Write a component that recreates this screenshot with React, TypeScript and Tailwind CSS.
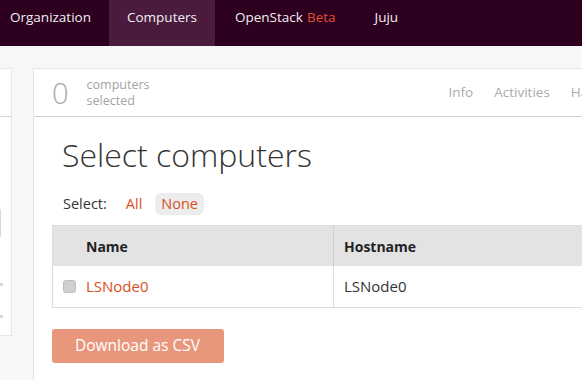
import React from 'react';

const font = { fontFamily: '"Open Sans", "DejaVu Sans", sans-serif' };

function TopNav() {
  return (
    <nav className="flex h-[46px] bg-[#2c001e] text-[13.5px] text-[#f2eef0]">
      <a className="w-[109px] pl-[10px] pt-[7px]">Organization</a>
      <a className="w-[106px] pt-[7px] text-center bg-[#4a1b3d]">Computers</a>
      <a className="pl-[20px] pr-[20px] pt-[7px]">
        OpenStack<span className="ml-[4px] text-[#e0502e]">Beta</span>
      </a>
      <a className="pl-[19px] pt-[7px]">Juju</a>
    </nav>
  );
}

function Sidebar() {
  return (
    <aside className="ml-[-188px] w-[200px] h-[268px] shrink-0 bg-white border border-[#e6e6e6] flex flex-col">
      <div className="h-[48px] border-b border-[#d4d4d4]" />
      <div className="mt-[91px] mx-[10px] h-[30px] border border-[#d8d8d8] rounded-[2px]" />
      <div className="mt-[45px] self-end mr-[8px] w-[3px] h-[3px] bg-[#d6d6d6]" />
      <div className="mt-[29px] self-end mr-[8px] w-[3px] h-[3px] bg-[#d6d6d6]" />
    </aside>
  );
}

export default function App() {
  return (
    <div className="w-[582px] h-[380px] overflow-hidden bg-[#f7f7f7]" style={font}>
      <TopNav />
      <div className="flex gap-[21px] pt-[22px]">
        <Sidebar />
        <main className="w-[640px] shrink-0 h-[340px] bg-white border border-[#e6e6e6]">
          <header className="h-[48px] flex items-center border-b border-[#cfcfcf] pl-[18px]">
            <span className="text-[29px] leading-none text-[#aaa] font-light">0</span>
            <div className="ml-[18px] text-[12.5px] leading-[16px] text-[#a3a3a3]">
              <div>computers</div>
              <div>selected</div>
            </div>
            <div className="ml-[299px] flex gap-[21px] text-[13.5px] text-[#ababab]">
              <span>Info</span>
              <span>Activities</span>
              <span>Hardware</span>
            </div>
          </header>
          <div className="px-[18px]">
            <h1 className="pl-[10px] pt-[16px] text-[32px] leading-[44px] text-[#333] font-light">
              Select computers
            </h1>
            <div className="pl-[11px] mt-[16px] flex items-center text-[14.5px] text-[#333]">
              <span>Select:</span>
              <span className="ml-[14px] px-[5px] text-[#d94f24]">All</span>
              <span className="ml-[8px] px-[6px] py-[0px] rounded-[6px] bg-[#ececec] text-[#d94f24]">None</span>
            </div>
            <table className="mt-[10px] w-full border border-[#dcdcdc] border-collapse text-[14px]">
              <thead>
                <tr className="h-[41px] bg-[#e3e3e3] text-left text-[#222]">
                  <th className="w-[281px] pl-[33px] font-bold border-r border-[#cfcfcf]">Name</th>
                  <th className="pl-[10px] font-bold">Hostname</th>
                </tr>
              </thead>
              <tbody>
                <tr className="h-[41px]">
                  <td className="pl-[10px] border-r border-[#dcdcdc]">
                    <div className="flex items-center gap-[10px]">
                      <span className="w-[13px] h-[13px] rounded-[3px] bg-[#cfcfcf] border border-[#bdbdbd]" />
                      <span className="text-[15px] text-[#d94f24]">LSNode0</span>
                    </div>
                  </td>
                  <td className="pl-[10px] text-[15px] text-[#333]">LSNode0</td>
                </tr>
              </tbody>
            </table>
            <button className="mt-[21px] w-[172px] h-[34px] rounded-[3px] bg-[#e9977c] text-white text-[15.5px] text-left pl-[23px]">
              Download as CSV
            </button>
          </div>
        </main>
      </div>
    </div>
  );
}
